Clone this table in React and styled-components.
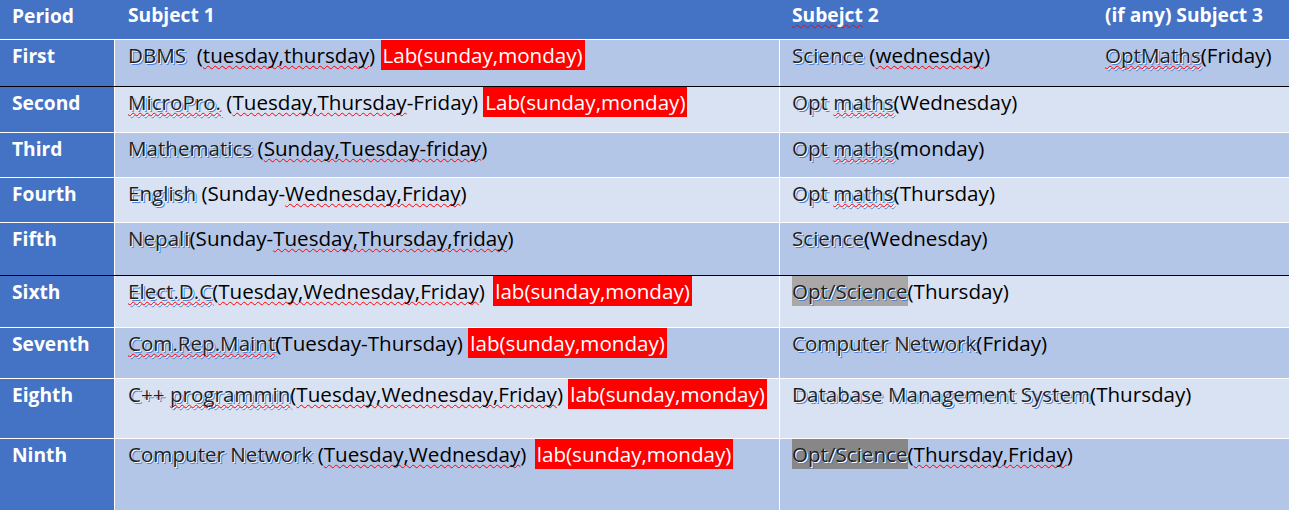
import React from "react";
import styled, { createGlobalStyle } from "styled-components";

const Global = createGlobalStyle`
  html, body { margin: 0; padding: 0; background: #ffffff; }
  body { font-family: "Open Sans", sans-serif; }
`;

const Table = styled.div`
  width: 1289px;
  display: flex;
  flex-direction: column;
  font-family: "Open Sans", "Noto Sans", sans-serif;
  font-size: 20.6px;
  color: #000;
`;

const Row = styled.div`
  display: flex;
  height: ${(p) => p.$h}px;
  border-bottom: 1px solid ${(p) => (p.$black ? "#000000" : "#ffffff")};
  background: ${(p) => (p.$header ? "#4472c4" : p.$dark ? "#b4c6e7" : "#d9e2f3")};
  flex-shrink: 0;
`;

const PeriodCell = styled.div`
  width: 115px;
  flex-shrink: 0;
  box-sizing: border-box;
  padding-left: 12px;
  background: #4472c4;
  color: #ffffff;
  font-weight: 700;
  font-size: 19.2px;
  line-height: 31px;
  border-right: ${(p) => (p.$header ? "1px solid #4472c4" : "1px solid #ffffff")};
`;

const Subject1Cell = styled.div`
  width: 665px;
  flex-shrink: 0;
  box-sizing: border-box;
  padding-left: 13px;
  line-height: 30px;
  white-space: pre;
  border-right: ${(p) => (p.$header ? "1px solid #4472c4" : "1px solid #ffffff")};
  color: ${(p) => (p.$header ? "#ffffff" : "#000")};
  font-weight: ${(p) => (p.$header ? 700 : 400)};
  font-size: ${(p) => (p.$header ? "19.2px" : "20.6px")};
`;

const Subject2Cell = styled.div`
  flex: 1;
  display: flex;
  box-sizing: border-box;
  padding-left: 12px;
  line-height: 30px;
  white-space: pre;
  color: ${(p) => (p.$header ? "#ffffff" : "#000")};
  font-weight: ${(p) => (p.$header ? 700 : 400)};
  font-size: ${(p) => (p.$header ? "19.2px" : "20.6px")};
`;

const TabStop = styled.span`
  display: inline-block;
  width: ${(p) => p.$w}px;
  flex-shrink: 0;
`;

const Fancy = styled.span`
  color: #1f1f1f;
  text-shadow: 1px 1px 0 #ffffff, 2px 2px 0.5px #4f82d6;
  background: ${(p) => p.$bg || "transparent"};
  display: ${(p) => (p.$bg ? "inline-block" : "inline")};
  height: ${(p) => (p.$bg ? "30px" : "auto")};
`;

const Wavy = styled.span`
  text-decoration: underline wavy #ff0000;
  text-decoration-thickness: 1px;
  text-underline-offset: 2px;
  text-decoration-skip-ink: none;
`;

const Lab = styled.span`
  display: inline-block;
  height: 30px;
  background: #ff0000;
  color: #ffffff;
  padding: 0 2px;
  margin-left: ${(p) => p.$ml || 0}px;
`;

const rows = [
  {
    period: "First",
    h: 46,
    dark: true,
    black: true,
    s1: (
      <>
        <Fancy>DBMS</Fancy>
        {"  ("}
        <Wavy>tuesday,thursday</Wavy>
        {") "}
        <Lab>Lab(sunday,monday)</Lab>
      </>
    ),
    s2: (
      <>
        <TabStop $w={313}>
          <Fancy>Science</Fancy>
          {" ("}
          <Wavy>wednesday</Wavy>
          {")"}
        </TabStop>
        <span>
          <Wavy>
            <Fancy>OptMaths</Fancy>
          </Wavy>
          (Friday)
        </span>
      </>
    ),
  },
  {
    period: "Second",
    h: 45,
    dark: false,
    s1: (
      <>
        <Wavy>
          <Fancy>MicroPro.</Fancy>
        </Wavy>
        {" ("}
        <Wavy>Tuesday,Thursday</Wavy>
        {"-Friday) "}
        <Lab>Lab(sunday,monday)</Lab>
      </>
    ),
    s2: (
      <>
        <Fancy>Opt </Fancy>
        <Wavy>
          <Fancy>maths</Fancy>
        </Wavy>
        (Wednesday)
      </>
    ),
  },
  {
    period: "Third",
    h: 44,
    dark: true,
    s1: (
      <>
        <Fancy>Mathematics</Fancy>
        {" ("}
        <Wavy>Sunday,Tuesday-friday</Wavy>
        {")"}
      </>
    ),
    s2: (
      <>
        <Fancy>Opt </Fancy>
        <Wavy>
          <Fancy>maths</Fancy>
        </Wavy>
        (monday)
      </>
    ),
  },
  {
    period: "Fourth",
    h: 44,
    dark: false,
    s1: (
      <>
        <Fancy>English</Fancy>
        {" (Sunday-"}
        <Wavy>Wednesday,Friday</Wavy>
        {")"}
      </>
    ),
    s2: (
      <>
        <Fancy>Opt </Fancy>
        <Wavy>
          <Fancy>maths</Fancy>
        </Wavy>
        (Thursday)
      </>
    ),
  },
  {
    period: "Fifth",
    h: 52,
    dark: true,
    black: true,
    s1: (
      <>
        <Fancy>Nepali</Fancy>
        {"(Sunday-"}
        <Wavy>Tuesday,Thursday,friday</Wavy>
        {")"}
      </>
    ),
    s2: (
      <>
        <Fancy>Science</Fancy>
        (Wednesday)
      </>
    ),
  },
  {
    period: "Sixth",
    h: 51,
    dark: false,
    s1: (
      <>
        <Wavy>
          <Fancy>Elect.D.C</Fancy>
        </Wavy>
        {"("}
        <Wavy>Tuesday,Wednesday,Friday</Wavy>
        {") "}
        <Lab $ml={3}>lab(sunday,monday)</Lab>
      </>
    ),
    s2: (
      <>
        <Fancy $bg="#a9a7a7">Opt/Science</Fancy>
        (Thursday)
      </>
    ),
  },
  {
    period: "Seventh",
    h: 50,
    dark: true,
    s1: (
      <>
        <Wavy>
          <Fancy>Com.Rep.Maint</Fancy>
        </Wavy>
        {"(Tuesday-Thursday) "}
        <Lab>lab(sunday,monday)</Lab>
      </>
    ),
    s2: (
      <>
        <Fancy>Computer Network</Fancy>
        (Friday)
      </>
    ),
  },
  {
    period: "Eighth",
    h: 59,
    dark: false,
    s1: (
      <>
        <Fancy>C++ </Fancy>
        <Wavy>
          <Fancy>programmin</Fancy>
        </Wavy>
        {"("}
        <Wavy>Tuesday,Wednesday,Friday</Wavy>
        {") "}
        <Lab>lab(sunday,monday)</Lab>
      </>
    ),
    s2: (
      <>
        <Fancy>Database Management System</Fancy>
        (Thursday)
      </>
    ),
  },
  {
    period: "Ninth",
    h: 72,
    dark: true,
    s1: (
      <>
        <Fancy>Computer Network</Fancy>
        {" ("}
        <Wavy>Tuesday,Wednesday</Wavy>
        {") "}
        <Lab $ml={3}>lab(sunday,monday)</Lab>
      </>
    ),
    s2: (
      <>
        <Fancy $bg="#878787">Opt/Science</Fancy>
        {"("}
        <Wavy>Thursday,Friday</Wavy>
        {")"}
      </>
    ),
  },
];

export default function App() {
  return (
    <>
      <Global />
      <Table>
        <Row $header $h={39}>
          <PeriodCell $header>Period</PeriodCell>
          <Subject1Cell $header>Subject 1</Subject1Cell>
          <Subject2Cell $header>
            <TabStop $w={313}>
              <Wavy>Subejct</Wavy> 2
            </TabStop>
            <span>(if any) Subject 3</span>
          </Subject2Cell>
        </Row>
        {rows.map((r) => (
          <Row key={r.period} $h={r.h} $dark={r.dark} $black={r.black}>
            <PeriodCell>{r.period}</PeriodCell>
            <Subject1Cell>{r.s1}</Subject1Cell>
            <Subject2Cell>{r.s2}</Subject2Cell>
          </Row>
        ))}
      </Table>
    </>
  );
}
